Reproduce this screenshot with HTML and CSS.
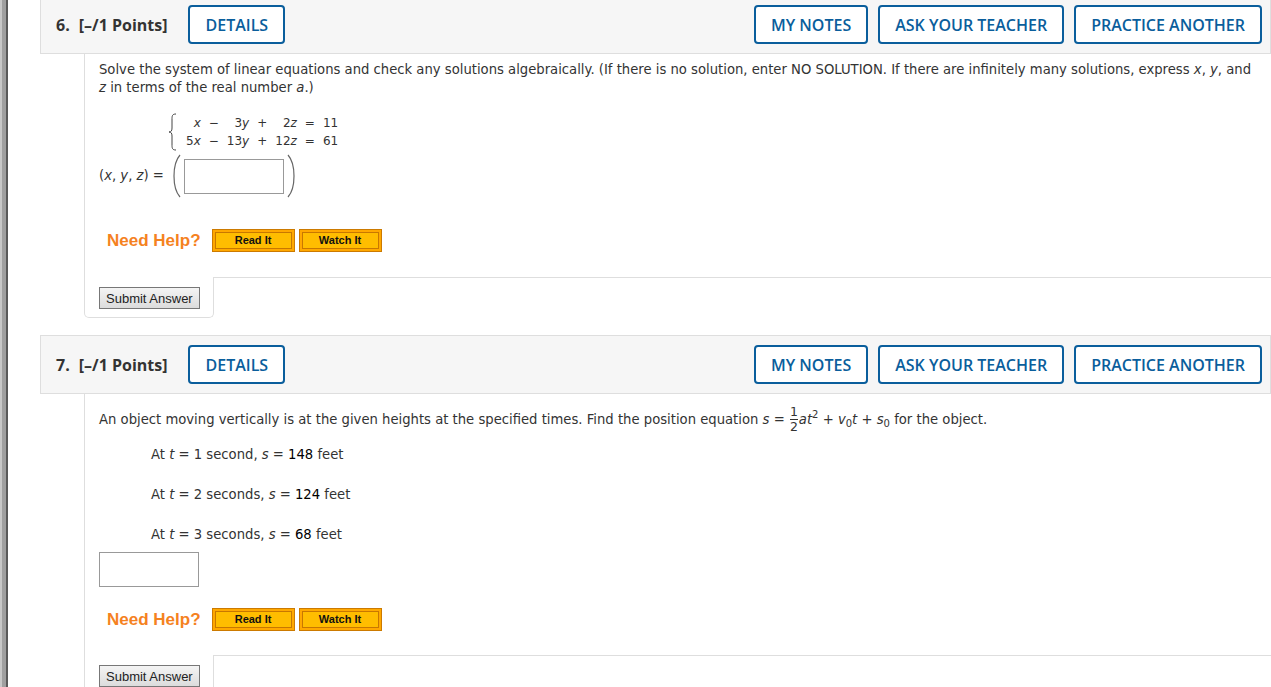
FILE: index.html
```html
<!DOCTYPE html>
<html lang="en">
<head>
    <meta charset="UTF-8">
    <title>Assignment</title>
    <link rel="stylesheet" href="styles.css">
</head>
<body>
    <div class="frame"></div>
    <div class="main">

        <!-- question 6 -->
        <div class="question first">
            <div class="q-head">
                <span class="q-num">6.</span>
                <span class="q-points">[&ndash;/1 Points]</span>
                <button class="head-btn">DETAILS</button>
                <span class="spacer"></span>
                <button class="head-btn">MY NOTES</button>
                <button class="head-btn">ASK YOUR TEACHER</button>
                <button class="head-btn">PRACTICE ANOTHER</button>
            </div>
            <div class="q-body body6">
                <p class="prompt">Solve the system of linear equations and check any solutions algebraically. (If there is no solution, enter NO SOLUTION. If there are infinitely many solutions, express <i>x</i>, <i>y</i>, and <i>z</i> in terms of the real number <i>a</i>.)</p>

                <div class="system">
                    <svg class="brace" width="10" height="38" viewBox="0 0 10 38">
                        <path d="M8 1 C4 1 4 3 4 7 L4 15 C4 18 3 19 1 19 C3 19 4 20 4 23 L4 31 C4 35 4 37 8 37" fill="none" stroke="#444" stroke-width="1"/>
                    </svg>
                    <table class="eq">
                        <tr><td><i>x</i></td><td>&minus;</td><td>3<i>y</i></td><td>+</td><td>2<i>z</i></td><td>=</td><td class="l">11</td></tr>
                        <tr><td>5<i>x</i></td><td>&minus;</td><td>13<i>y</i></td><td>+</td><td>12<i>z</i></td><td>=</td><td class="l">61</td></tr>
                    </table>
                </div>

                <div class="answer-row">
                    <span class="tuple">(<i>x</i>, <i>y</i>, <i>z</i>) =</span>
                    <svg class="paren" width="12" height="44" viewBox="0 0 12 44">
                        <path d="M10 1 C2 10 2 34 10 43" fill="none" stroke="#666" stroke-width="1.2"/>
                    </svg>
                    <span class="box wide"></span>
                    <svg class="paren" width="12" height="44" viewBox="0 0 12 44">
                        <path d="M2 1 C10 10 10 34 2 43" fill="none" stroke="#666" stroke-width="1.2"/>
                    </svg>
                </div>

                <div class="help help6">
                    <span class="need">Need Help?</span>
                    <span class="help-btn"><span>Read It</span></span>
                    <span class="help-btn"><span>Watch It</span></span>
                </div>
            </div>
            <div class="q-foot">
                <div class="submit-cell"><button class="submit">Submit Answer</button></div>
                <div class="foot-rest"></div>
            </div>
        </div>

        <!-- question 7 -->
        <div class="question">
            <div class="q-head">
                <span class="q-num">7.</span>
                <span class="q-points">[&ndash;/1 Points]</span>
                <button class="head-btn">DETAILS</button>
                <span class="spacer"></span>
                <button class="head-btn">MY NOTES</button>
                <button class="head-btn">ASK YOUR TEACHER</button>
                <button class="head-btn">PRACTICE ANOTHER</button>
            </div>
            <div class="q-body body7">
                <p class="prompt">An object moving vertically is at the given heights at the specified times. Find the position equation <i>s</i> = <span class="frac"><span>1</span><span class="den">2</span></span><i>at</i><sup>2</sup> + <i>v</i><sub>0</sub><i>t</i> + <i>s</i><sub>0</sub> for the object.</p>

                <p class="fact">At <i>t</i> = 1 second, <i>s</i> = <b>148</b> feet</p>
                <p class="fact">At <i>t</i> = 2 seconds, <i>s</i> = <b>124</b> feet</p>
                <p class="fact">At <i>t</i> = 3 seconds, <i>s</i> = <b>68</b> feet</p>

                <span class="box single"></span>

                <div class="help help7">
                    <span class="need">Need Help?</span>
                    <span class="help-btn"><span>Read It</span></span>
                    <span class="help-btn"><span>Watch It</span></span>
                </div>
            </div>
            <div class="q-foot">
                <div class="submit-cell"><button class="submit">Submit Answer</button></div>
                <div class="foot-rest"></div>
            </div>
        </div>

    </div>
</body>
</html>
```

FILE: styles.css
```css
html, body {
    height: 100%;
}
body {
    margin: 0;
    display: flex;
    background: #fff;
    overflow: hidden;
    font-family: "DejaVu Sans", Verdana, sans-serif;
    color: #333;
}
.frame {
    flex: 0 0 4px;
    border-left: 2px solid #c8c8c8;
    border-right: 2px solid #5a5a5a;
    background: #a0a0a0;
}
.main {
    flex: 1;
    padding-left: 32px;
    min-width: 0;
}

/* question header */
.question {
    margin-top: 17px;
}
.question.first {
    margin-top: -5px;
}
.q-head {
    display: flex;
    align-items: center;
    gap: 10px;
    height: 57px;
    padding: 0 8px 0 15px;
    background: #f6f6f6;
    border: 1px solid #dedede;
    font-family: "Open Sans", sans-serif;
}
.q-num {
    font-weight: 700;
    font-size: 16px;
    color: #333;
    margin-right: -1px;
}
.q-points {
    font-weight: 700;
    font-size: 16px;
    color: #333;
    margin-right: 11px;
}
.spacer {
    flex: 1;
}
.head-btn {
    height: 39px;
    padding: 0 15px;
    background: #fff;
    border: 2px solid #0a5e9c;
    border-radius: 4px;
    color: #0a5e9c;
    font-family: "Open Sans", sans-serif;
    font-weight: 600;
    font-size: 16px;
    cursor: pointer;
}

/* question body */
.q-body {
    margin-left: 44px;
    border-left: 1px solid #dedede;
    padding: 0 14px;
    font-size: 13.2px;
    line-height: 18px;
}
.prompt {
    margin: 0;
}
.body6 {
    padding-top: 7px;
    height: 216px;
}
.body7 {
    padding-top: 11px;
    height: 250px;
}
i {
    font-style: italic;
}
b {
    font-weight: normal;
    color: #000;
}

.system {
    display: flex;
    align-items: center;
    margin: 16px 0 0 69px;
}
.brace {
    margin-right: 4px;
}
.eq {
    border-collapse: collapse;
    font-size: 12px;
}
.eq td {
    padding: 0 4px;
    text-align: right;
    line-height: 18px;
}
.eq td.l {
    text-align: left;
}

.answer-row {
    display: flex;
    align-items: center;
    margin-top: 3px;
    height: 44px;
}
.tuple {
    margin-right: 4px;
}
.paren {
    margin: 0 2px;
}
.box {
    display: inline-block;
    background: #fff;
    border: 1px solid #999;
    height: 33px;
}
.box.wide {
    width: 98px;
}
.box.single {
    display: block;
    width: 98px;
    margin-top: 8px;
}

.help {
    display: flex;
    align-items: center;
    gap: 4px;
    margin-left: 8px;
}
.help6 {
    margin-top: 31px;
}
.help7 {
    margin-top: 21px;
}
.need {
    font-family: "Liberation Sans", Arial, sans-serif;
    font-weight: 700;
    font-size: 17px;
    color: #f5821f;
    margin-right: 7px;
}
.help-btn {
    display: inline-block;
    padding: 2px;
    background: #ffa800;
    border: 1px solid #cc7a00;
}
.help-btn span {
    display: block;
    width: 75px;
    height: 15px;
    line-height: 15px;
    text-align: center;
    background: #ffbd00;
    border: 1px solid #c87800;
    font-family: "Liberation Sans", Arial, sans-serif;
    font-weight: 700;
    font-size: 11px;
    color: #111;
}

/* fraction and scripts */
.frac {
    display: inline-flex;
    flex-direction: column;
    vertical-align: middle;
    font-size: 12.5px;
    line-height: 14px;
    text-align: center;
    margin: 0 1px;
}
.frac .den {
    border-top: 1px solid #333;
}
sup, sub {
    font-size: 10px;
    line-height: 0;
}

.fact {
    margin: 12px 0 0 52px;
}
.fact + .fact {
    margin-top: 22px;
}

/* footer with submit */
.q-foot {
    display: flex;
    margin-left: 44px;
}
.submit-cell {
    width: 130px;
    padding: 10px 0 8px 14px;
    box-sizing: border-box;
    border: 1px solid #dedede;
    border-top: none;
    border-radius: 0 0 5px 5px;
}
.foot-rest {
    flex: 1;
    border-top: 1px solid #dedede;
}
.submit {
    display: block;
    height: 22px;
    padding: 0 6px;
    font-family: "Liberation Sans", Arial, sans-serif;
    font-size: 13px;
    color: #222;
    background: linear-gradient(#f4f4f4, #dcdcdc);
    border: 1px solid #777;
    border-radius: 0;
}
```
